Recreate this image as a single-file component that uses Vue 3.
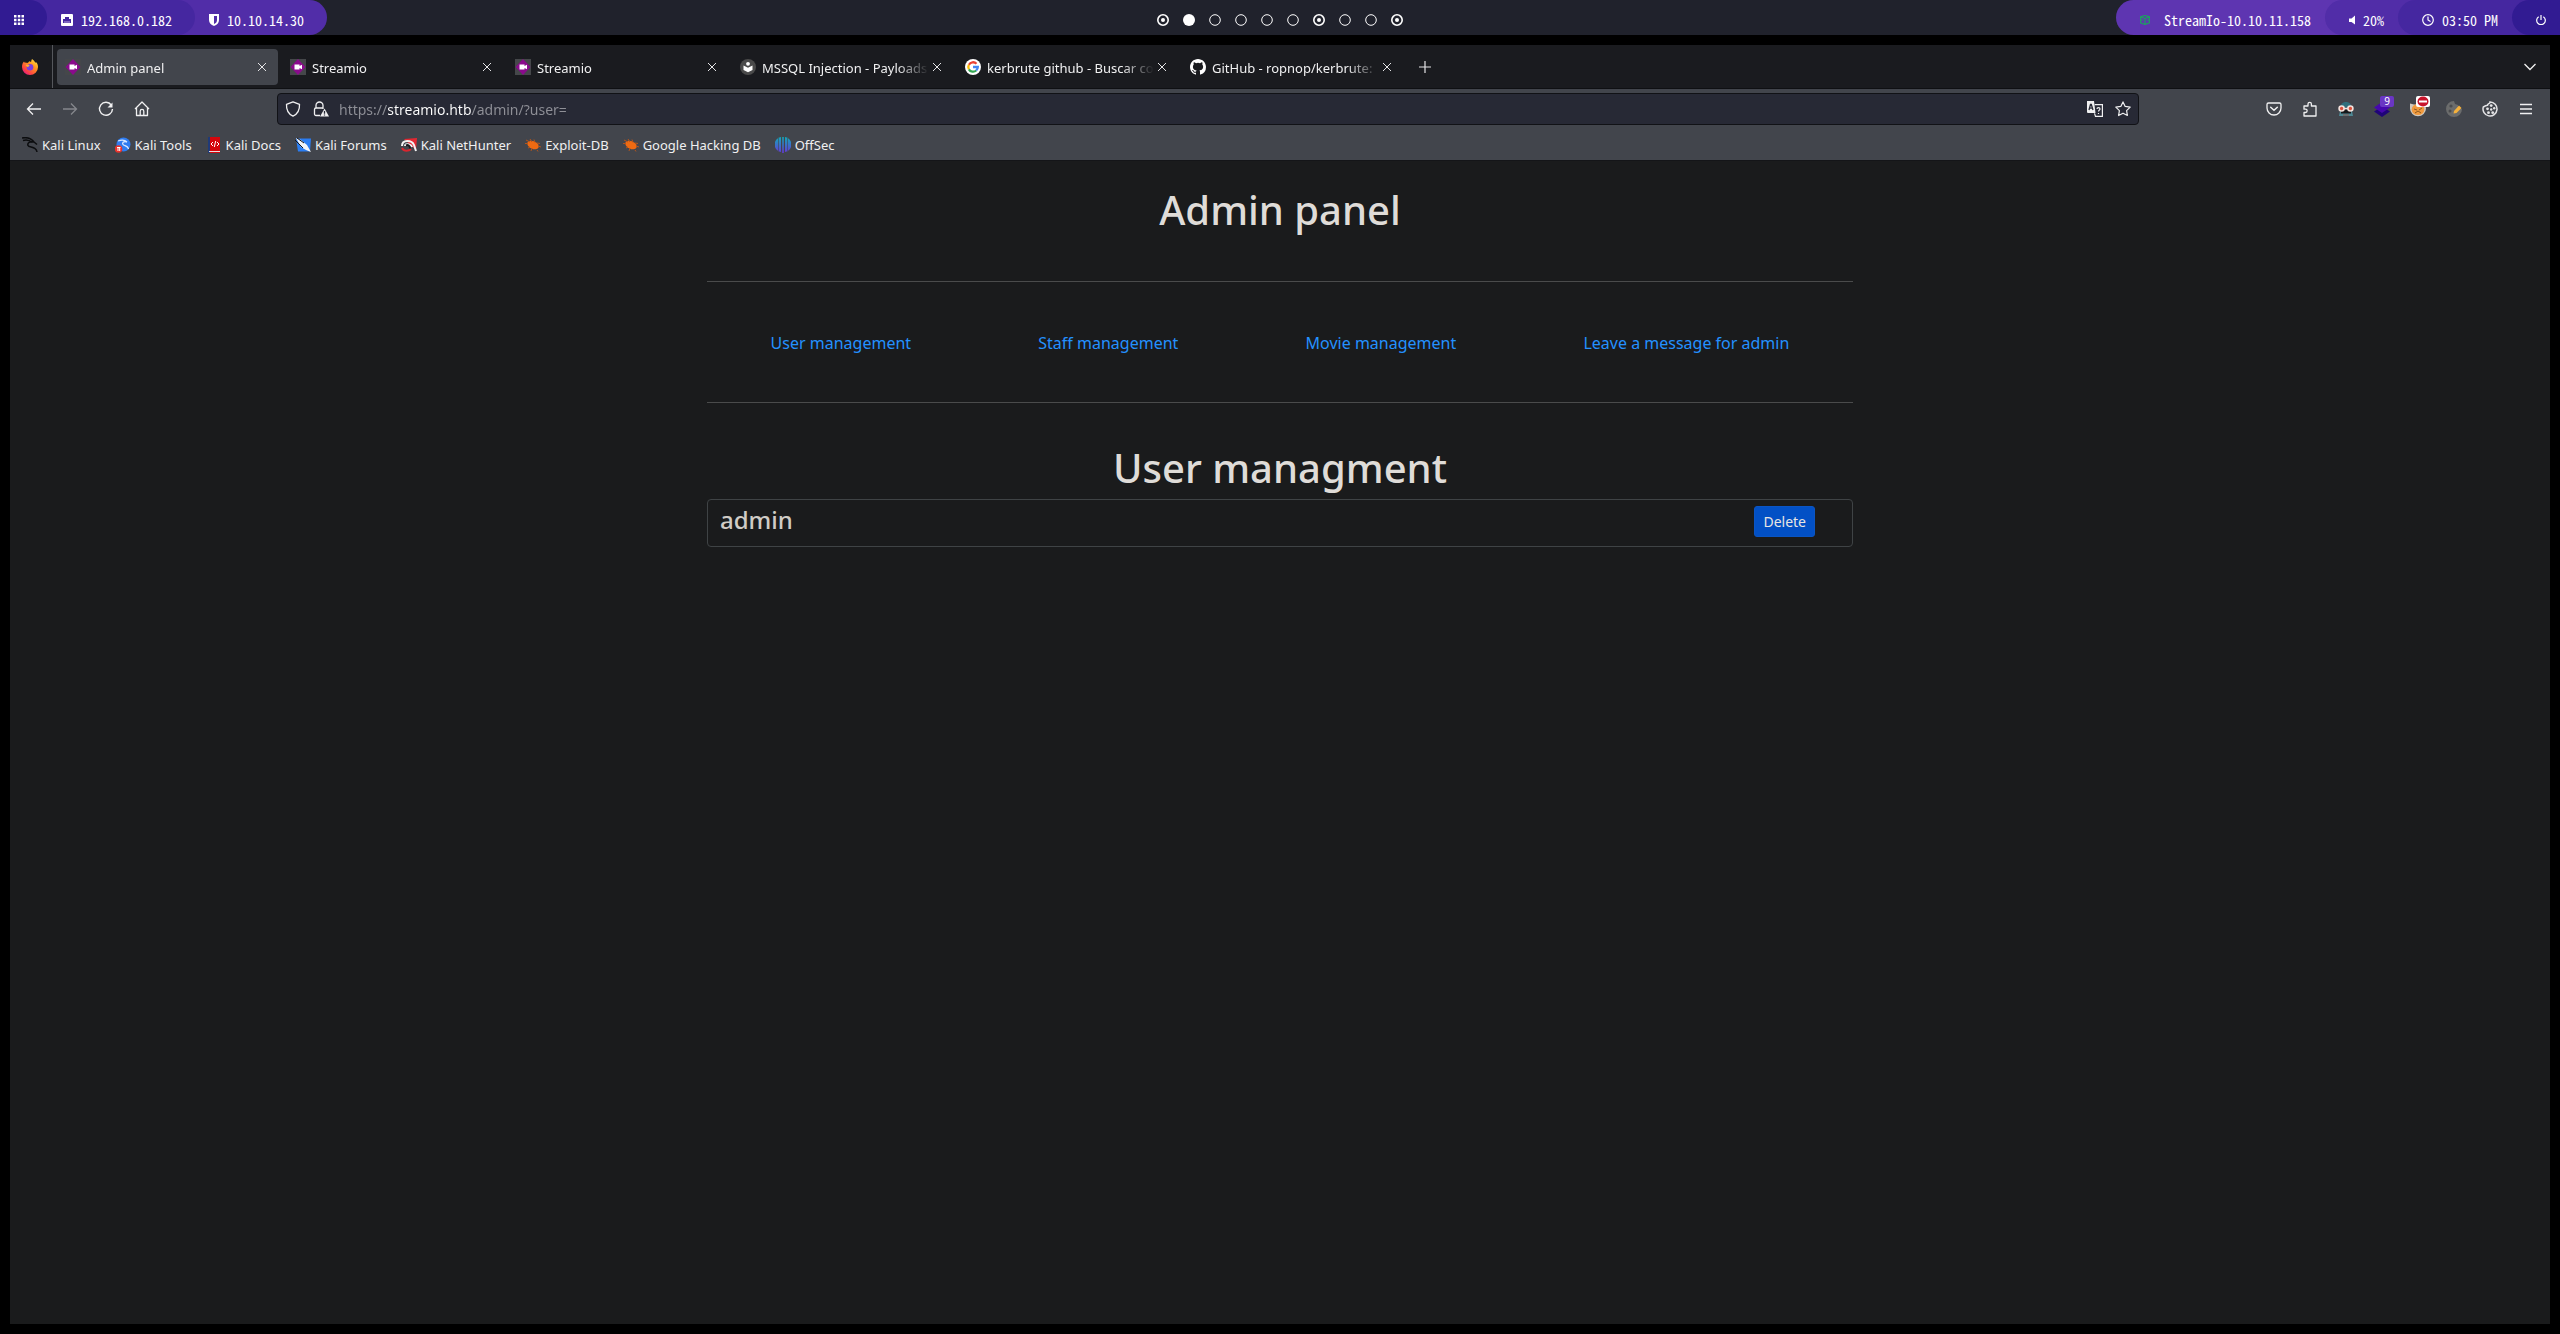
<script setup>
import { ref } from 'vue'

const leftSegments = [
  { tone: 'a', next: 'b', icon: 'grid', text: '' },
  { tone: 'b', next: 'c', icon: 'ethernet', text: '192.168.0.182' },
  { tone: 'c', next: 'bar', icon: 'vpn', text: '10.10.14.30' },
]
const rightSegments = [
  { tone: 'd', next: 'bar', icon: 'cube', text: 'StreamIo-10.10.11.158' },
  { tone: 'c', next: 'd', icon: 'volume', text: '20%' },
  { tone: 'b', next: 'c', icon: 'clock', text: '03:50 PM' },
  { tone: 'a', next: 'b', icon: 'power', text: '' },
]
const workspaces = ['busy', 'active', 'empty', 'empty', 'empty', 'empty', 'busy', 'empty', 'empty', 'busy']

const tabs = [
  { title: 'Admin panel', icon: 'streamio' },
  { title: 'Streamio', icon: 'streamio' },
  { title: 'Streamio', icon: 'streamio' },
  { title: 'MSSQL Injection - Payloads', icon: 'book' },
  { title: 'kerbrute github - Buscar co', icon: 'google' },
  { title: 'GitHub - ropnop/kerbrute:', icon: 'github' },
]
const bookmarks = [
  { label: 'Kali Linux', icon: 'kali' },
  { label: 'Kali Tools', icon: 'tools' },
  { label: 'Kali Docs', icon: 'docs' },
  { label: 'Kali Forums', icon: 'forums' },
  { label: 'Kali NetHunter', icon: 'nethunter' },
  { label: 'Exploit-DB', icon: 'exploit' },
  { label: 'Google Hacking DB', icon: 'exploit' },
  { label: 'OffSec', icon: 'offsec' },
]
const links = ['User management', 'Staff management', 'Movie management', 'Leave a message for admin']
const users = ['admin']
const url = ref('https://streamio.htb/admin/?user=')
</script>

<template>
  <div class="desktop">
    <header class="bar">
      <div class="side left">
        <div v-for="s in leftSegments" :key="s.icon" class="wrap" :class="'bg-' + s.next">
          <div class="seg" :class="['bg-' + s.tone, 'seg-' + s.icon]">
            <svg v-if="s.icon === 'grid'" width="10" height="10" viewBox="0 0 10 10" fill="#fff"><path d="M0 0h2.500v2.500H0zM3.800 0h2.500v2.500H3.800zM7.500 0H10v2.500H7.500zM0 3.800h2.500v2.500H0zM3.800 3.800h2.500v2.500H3.800zM7.500 3.800H10v2.500H7.500zM0 7.500h2.500V10H0zM3.800 7.500h2.500V10H3.800zM7.500 7.500H10V10H7.500z" /></svg>
            <svg v-else-if="s.icon === 'ethernet'" width="12" height="12" viewBox="0 0 12 12"><rect width="12" height="12" rx="1" fill="#fff" /><path d="M2 9V5h2V3h4v2h2v4z" fill="#4527a0" /><path d="M4 9V7M6 9V7M8 9V7" stroke="#b9a8de" stroke-width="1" /></svg>
            <svg v-else width="10" height="12" viewBox="0 0 10 12"><path d="M0 0h10v6c0 3-2 5-5 6-3-1-5-3-5-6z" fill="#fff" /><path d="M5 2h3v4c0 2-1 3-3 4z" fill="#512da8" /></svg>
            <span v-if="s.text">{{ s.text }}</span>
          </div>
        </div>
      </div>
      <div class="workspaces">
        <button v-for="(w, i) in workspaces" :key="i" class="ws" :aria-label="'Workspace ' + (i + 1)">
          <svg width="12" height="12" viewBox="0 0 12 12" fill="none" stroke="#fff">
            <circle v-if="w === 'active'" cx="6" cy="6" r="6" fill="#fff" stroke="none" />
            <circle v-else-if="w === 'empty'" cx="6" cy="6" r="5.3" stroke-width="1" />
            <template v-else><circle cx="6" cy="6" r="5.2" stroke-width="1.6" /><circle cx="6" cy="6" r="2" fill="#fff" stroke="none" /></template>
          </svg>
        </button>
      </div>
      <div class="side right">
        <div v-for="s in rightSegments" :key="s.icon" class="wrap" :class="'bg-' + s.next">
          <div class="seg" :class="['bg-' + s.tone, 'seg-' + s.icon]">
            <svg v-if="s.icon === 'cube'" width="10" height="10" viewBox="0 0 10 10" fill="none" stroke="#1f9d63" stroke-width="1.200"><path d="M5 .5l4.400 1.300v6L5 9.500.6 7.800v-6zM.6 1.800L5 3.500l4.400-1.700M5 3.500v6M.6 5H3M7 5h2.400" /></svg>
            <svg v-else-if="s.icon === 'volume'" width="6" height="10" viewBox="0 0 6 10" fill="#fff"><path d="M6 .5v9L2.500 7H0V3.500h2.500z" /></svg>
            <svg v-else-if="s.icon === 'clock'" width="12" height="12" viewBox="0 0 12 12" fill="none" stroke="#fff" stroke-width="1.200"><circle cx="6" cy="6" r="5.300" /><path d="M6 2.500V6l2.500 1.500" /></svg>
            <svg v-else width="10" height="10" viewBox="0 0 10 10" fill="none" stroke="#fff" stroke-width="1.200"><path d="M5 0v5M2.700 1.700a4.300 4.300 0 1 0 4.600 0" /></svg>
            <span v-if="s.text">{{ s.text }}</span>
          </div>
        </div>
      </div>
    </header>

    <div class="window">
      <nav class="tabstrip" aria-label="Tabs">
        <button class="pinned" aria-label="Firefox View">
          <svg width="16" height="16" viewBox="0 0 16 16">
            <defs>
              <linearGradient id="fx" x1="1" y1="0" x2=".2" y2="1"><stop offset="0" stop-color="#fff14f" /><stop offset=".4" stop-color="#ff9a1f" /><stop offset=".75" stop-color="#ff4a3f" /><stop offset="1" stop-color="#e31587" /></linearGradient>
            </defs>
            <path d="M10 0c2 1.200 2.500 2.400 3 3.300.6.300 1 .2 1.200-.1C15.500 4.500 16 6.300 16 8a8 8 0 0 1-16 0c0-2.400.8-4.200 1.800-5.500L2 4l1-1.500L3.600 4c.8-.3 1.600-.3 2.400 0 .2-.8.900-1.400 1.600-1.700.900.300 1.200.7 1.400 1C9.200 2 9.500 1 10 0z" fill="url(#fx)" />
            <circle cx="8" cy="8.200" r="3.300" fill="#7a3fe0" />
            <path d="M3.500 6c1.500-1 3-.6 4.500.8-1.500 0-1.700.7-1.500 1.500-1.200-.3-2.300-1-3-2.300z" fill="#ffb02e" />
          </svg>
        </button>
        <div v-for="(t, i) in tabs" :key="i" class="tab" :class="{ selected: i === 0 }">
          <svg v-if="t.icon === 'streamio'" class="ico" viewBox="0 0 16 16"><rect width="16" height="16" fill="#45474a" /><path d="M8 0l7.500 8L8 16 .5 8z" fill="#8a0b8c" /><path d="M4.500 5.500h5V7l2.500-1.200v4.400L9.500 9v1.500h-5z" fill="#fff" /></svg>
          <svg v-else-if="t.icon === 'book'" class="ico" viewBox="0 0 16 16"><circle cx="8" cy="8" r="8" fill="#4a4a4a" /><circle cx="8" cy="4.800" r="1.900" fill="#fff" /><path d="M3.500 6.500L8 8.800l4.500-2.300v4.500L8 13.200 3.500 11z" fill="#fff" /></svg>
          <svg v-else-if="t.icon === 'google'" class="ico" viewBox="0 0 16 16"><circle cx="8" cy="8" r="8" fill="#fff" /><g fill="none" stroke-width="2.300"><path d="M11.500 4.700A4.800 4.800 0 0 0 3.900 5.700" stroke="#ea4335" /><path d="M3.900 5.700a4.800 4.800 0 0 0 0 4.600" stroke="#fbbc05" /><path d="M3.900 10.300a4.800 4.800 0 0 0 7.300 1.200" stroke="#34a853" /><path d="M11.200 11.500A4.800 4.800 0 0 0 12.800 8H8" stroke="#4285f4" /></g></svg>
          <svg v-else class="ico" viewBox="0 0 16 16" fill="#fff"><path d="M8 0C3.580 0 0 3.580 0 8c0 3.540 2.290 6.530 5.470 7.590.4.070.55-.17.55-.38 0-.19-.01-.82-.01-1.490-2.010.37-2.530-.49-2.690-.94-.09-.23-.48-.94-.82-1.130-.28-.15-.68-.52-.01-.53.63-.01 1.080.58 1.230.82.72 1.210 1.870.87 2.330.66.07-.52.28-.87.51-1.070-1.780-.2-3.640-.89-3.640-3.950 0-.87.31-1.590.82-2.150-.08-.2-.36-1.020.08-2.120 0 0 .67-.21 2.200.82a7.420 7.420 0 0 1 4 0c1.530-1.040 2.200-.82 2.200-.82.44 1.100.16 1.920.08 2.120.51.56.82 1.270.82 2.150 0 3.070-1.870 3.750-3.650 3.950.29.25.54.73.54 1.480 0 1.070-.01 1.930-.01 2.200 0 .21.15.46.55.38A8 8 0 0 0 16 8c0-4.420-3.580-8-8-8z" /></svg>
          <span class="title">{{ t.title }}</span>
          <button class="close" aria-label="Close tab"><svg width="10" height="10" viewBox="0 0 10 10" stroke="#e4e4e6"><path d="M1 1l8 8M9 1L1 9" /></svg></button>
        </div>
        <button class="newtab" aria-label="New tab"><svg width="12" height="12" viewBox="0 0 12 12" stroke="#e4e4e6" stroke-width="1.200"><path d="M6 0v12M0 6h12" /></svg></button>
        <button class="alltabs" aria-label="List all tabs"><svg width="12" height="8" viewBox="0 0 12 8" fill="none" stroke="#f0f0f1" stroke-width="1.300"><path d="M.5 1L6 6.500 11.500 1" /></svg></button>
      </nav>

      <div class="toolbar">
        <div class="navbtns">
          <button aria-label="Back"><svg class="ico" viewBox="0 0 16 16" fill="none" stroke="#f0f0f1" stroke-width="1.300"><path d="M1.500 8H15M7 2.500L1.500 8 7 13.500" /></svg></button>
          <button aria-label="Forward" disabled><svg class="ico" viewBox="0 0 16 16" fill="none" stroke="#85878c" stroke-width="1.300"><path d="M1 8h13.500M9 2.500L14.500 8 9 13.500" /></svg></button>
          <button aria-label="Reload"><svg class="ico" viewBox="0 0 16 16" fill="none" stroke="#f0f0f1" stroke-width="1.400"><path d="M13.300 4A6.500 6.500 0 1 0 14.500 8" /><path d="M14.500 1.500v5h-5z" fill="#f0f0f1" stroke="none" /></svg></button>
          <button aria-label="Home"><svg class="ico" viewBox="0 0 16 16" fill="none" stroke="#f0f0f1" stroke-width="1.300" stroke-linejoin="round"><path d="M1 8l7-7 7 7M2.500 7v7.500h11V7M6.200 14.500v-4.300a1.800 1.800 0 0 1 3.600 0v4.300" /></svg></button>
        </div>
        <div class="urlbar">
          <svg class="ico" viewBox="0 0 16 16" fill="none" stroke="#f0f0f1" stroke-width="1.300" stroke-linejoin="round"><path d="M8 .8l6.500 2.500c.3 5.200-1.800 9.700-6.500 11.900C3.300 13 1.200 8.500 1.500 3.300z" /></svg>
          <svg class="ico lock" viewBox="0 0 16 16" fill="none" stroke="#f0f0f1" stroke-width="1.300"><path d="M7 14.500H3A1.500 1.500 0 0 1 1.500 13V8.500A1.500 1.500 0 0 1 3 7h7M3 7V4.500a3.500 3.500 0 0 1 7 0V8" /><path d="M11.500 7.500L16 15.500H7z" fill="#f0f0f1" stroke="none" /><path d="M11.500 10v2.700M11.500 13.500v1" stroke="#272935" /></svg>
          <input v-model="url" type="text" aria-label="Address" />
          <svg class="ico" viewBox="0 0 16 16"><path d="M0 0h7l1.500 12H1a1 1 0 0 1-1-1z" fill="#f0f0f1" /><path d="M7.700 3.600h7.700v11.800H8.500l-1-3" fill="none" stroke="#f0f0f1" stroke-width="1.200" /><path d="M2 9l1.500-5.500h.8L6 9M2.600 7.200h2.600" fill="none" stroke="#272935" stroke-width="1.300" /><path d="M10 8c0-1.800 3-1.800 3 0 0 1-1.500 1-1.500 2.500M11.500 12v1" fill="none" stroke="#f0f0f1" stroke-width="1.200" /></svg>
          <svg class="ico star" viewBox="0 0 16 16" fill="none" stroke="#f0f0f1" stroke-width="1.200" stroke-linejoin="round"><path d="M8 .9l2.200 4.500 5 .7-3.600 3.500.8 4.900L8 12.200l-4.400 2.300.8-4.900L.8 6.100l5-.7z" /></svg>
        </div>
        <div class="extbtns">
          <button aria-label="Pocket"><svg class="ico" viewBox="0 0 16 16" fill="none" stroke="#f0f0f1" stroke-width="1.300" stroke-linecap="round"><path d="M2.500 2h11A1.500 1.500 0 0 1 15 3.500V7A7 7 0 0 1 1 7V3.500A1.500 1.500 0 0 1 2.500 2z" /><path d="M4.700 6.200L8 9.300l3.300-3.100" stroke-width="1.500" /></svg></button>
          <button aria-label="Extensions"><svg class="ico" viewBox="0 0 16 16" fill="none" stroke="#f0f0f1" stroke-width="1.300" stroke-linejoin="round"><path d="M2 5h4V3a1.700 1.700 0 0 1 3.400 0v2H14v10H2v-3.500h1.500a1.600 1.600 0 0 0 0-3.300H2z" /></svg></button>
          <button aria-label="User agent"><svg class="ico" viewBox="0 0 16 16"><path d="M2.500 6.500c-.5-7.500 11.500-7.500 11 0z" fill="#2f6f7c" /><path d="M2 10h12l1 5H1z" fill="#4d8894" /><path d="M3 9h10v3.500H3z" fill="#16171a" /><path d="M5 13h6v2H5z" fill="#1b1c20" /><path d="M6 13v2M8 13v2M10 13v2" stroke="#e8e8e8" stroke-width=".8" /><path d="M6 7.500h4" stroke="#f4e2dc" stroke-width="1.500" /><circle cx="3.600" cy="7.500" r="2.500" fill="#d9523d" stroke="#f4e2dc" stroke-width="1.600" /><circle cx="12.400" cy="7.500" r="2.500" fill="#d9523d" stroke="#f4e2dc" stroke-width="1.600" /></svg></button>
          <button aria-label="Wappalyzer" class="badged"><svg class="ico" viewBox="0 0 16 16"><path d="M8 5.500l8 5-8 5.500-8-5.500z" fill="#1f0478" /><path d="M8 1l8 5.500-8 5.500L0 6.500z" fill="#4608ad" /></svg><span class="badge">9</span></button>
          <button aria-label="Proxy" class="badged"><svg class="ico" viewBox="0 0 16 16"><path d="M0 2.500l4 1h8l3-2 1 6a8 7.800 0 0 1-16 0z" fill="#cfc8bd" /><ellipse cx="8" cy="8.500" rx="6.300" ry="5.500" fill="#f19a3e" /><path d="M4 8l3 1M12 7L9 9M5 12l3-2 3 2" stroke="#8c5a20" fill="none" /></svg><span class="badge block"><svg width="12" height="11" viewBox="0 0 12 11"><ellipse cx="6" cy="5.500" rx="5.500" ry="5" fill="#c8142c" /><path d="M2 4.500h8v2H2z" fill="#fff" /></svg></span></button>
          <button aria-label="Cookie editor"><svg class="ico" viewBox="0 0 16 16"><path d="M8 0a8 8 0 1 0 8 8l-3-1-1-3-3-1z" fill="#6b6c6c" /><circle cx="5" cy="5" r="1.600" fill="#4a4b4d" /><circle cx="4" cy="10" r="1.500" fill="#4a4b4d" /><path d="M7.500 12.500L8 10l5-5.500L15.500 7l-5 5z" fill="#f5b13c" /></svg></button>
          <button aria-label="Cookies"><svg class="ico" viewBox="0 0 16 16"><path d="M8 1c.2 1.700-2.500 1.600-2.500 3.300C4 4.500 3 5 1.300 6A7 7 0 1 0 8 1z" fill="none" stroke="#e4e4e6" stroke-width="1.500" /><g fill="#e4e4e6"><circle cx="9.200" cy="4.600" r="1.400" /><circle cx="5.500" cy="7.800" r="1.400" /><circle cx="9.200" cy="8.500" r="1.200" /><circle cx="12.200" cy="7.300" r="1.200" /><circle cx="6.500" cy="11.700" r="1.400" /><circle cx="10.700" cy="11.700" r="1.400" /></g></svg></button>
          <button aria-label="Menu"><svg class="ico" viewBox="0 0 16 16" stroke="#f0f0f1" stroke-width="1.300"><path d="M2 3.500h12M2 8h12M2 12.500h12" /></svg></button>
        </div>
      </div>

      <nav class="bookmarks" aria-label="Bookmarks">
        <a v-for="b in bookmarks" :key="b.label" href="#">
          <svg v-if="b.icon === 'kali'" class="ico" viewBox="0 0 16 16" fill="none" stroke="#0c0d0f"><path d="M0 1c5-1 9 0 12 4M1 3.500c4-1 7 0 9 2M12 5c-4-1-7 1-6 3.500 1 2.500 8 .5 9 6.500M12 5l3 2.500" stroke-width="1.500" /></svg>
          <svg v-else-if="b.icon === 'tools'" class="ico" viewBox="0 0 16 16"><circle cx="8.500" cy="7.500" r="7" fill="#2f7cf0" /><path d="M3 4c4-1.500 7-1 9 1M12 5c-4-1-5 1-4 2.500s5 1 5.500 4.500" stroke="#d9e8ff" fill="none" stroke-width="1.300" /><circle cx="3.500" cy="12" r="3.800" fill="#e8322b" /><path d="M2 10.500h3.500M3 11v3M4.700 11v3" stroke="#fff" /></svg>
          <svg v-else-if="b.icon === 'docs'" class="ico" viewBox="0 0 16 16"><path d="M2 0h12v16H2z" fill="#d4060c" /><path d="M2 0h2v16H2z" fill="#203a78" /><path d="M3 14h11v1H3z" fill="#e9dede" /><path d="M7 5L5 7l2 2M11 5l2 2-2 2M9.700 4L8.300 10" stroke="#fff" fill="none" /></svg>
          <svg v-else-if="b.icon === 'forums'" class="ico" viewBox="0 0 16 16"><path d="M1 1.500h15l-1 13H3z" fill="#2a7df2" /><path d="M1 1l5 2 6 5 4 7-5-2-5-3z" fill="#f2f4f8" /><path d="M0 3l8 8M2 1l7 5" stroke="#15161a" /></svg>
          <svg v-else-if="b.icon === 'nethunter'" class="ico" viewBox="0 0 16 16"><path d="M3 2l13-1-1 12z" fill="#e32832" /><path d="M1 9c0-7 10-6 12-1l2 6M4 9c0-3 6-2 7 1" stroke="#f4f4f4" stroke-width="2" fill="none" /><path d="M1 11c2 4 7 3 9 1" stroke="#d8262f" stroke-width="2" fill="none" /><path d="M5 8.500c2-1 4 0 4 3" stroke="#16171b" stroke-width="2" fill="none" /></svg>
          <svg v-else-if="b.icon === 'exploit'" class="ico" viewBox="0 0 16 16"><ellipse cx="8" cy="8" rx="6" ry="3.800" transform="rotate(25 8 8)" fill="#ee6a12" /><path d="M1 3l4 2M0 6.500h3M5 2l2 3M9 2.500l1 3M3 11l2-1M6 14l1-3M12 13l1 1.500M12 6l3 .5M13 9l3 1" stroke="#b3541c" /></svg>
          <svg v-else class="ico" viewBox="0 0 16 16" fill="none"><defs><linearGradient id="os" x2="0" y2="1"><stop stop-color="#12a8b8" /><stop offset="1" stop-color="#6438d8" /></linearGradient></defs><path d="M6 0v15A7.600 7.600 0 0 1 6 0zM7.200 0h1.600v16H7.200zM10 0a7.600 7.600 0 0 1 0 15z" fill="url(#os)" /><path d="M3.500 1v13M12.500 1v13" stroke="#42454c" stroke-width=".6" /></svg>
          <span>{{ b.label }}</span>
        </a>
      </nav>

      <main class="page">
        <div class="container">
          <h1>Admin panel</h1>
          <nav class="links" aria-label="Admin sections">
            <a v-for="l in links" :key="l" href="#">{{ l }}</a>
          </nav>
          <h1>User managment</h1>
          <div v-for="u in users" :key="u" class="row">
            <h4>{{ u }}</h4>
            <button class="delete">Delete</button>
          </div>
        </div>
      </main>
    </div>
  </div>
</template>

<style>
body {
  background: #000;
}
</style>

<style scoped>
* {
  box-sizing: border-box;
}
button {
  display: flex;
  align-items: center;
  justify-content: center;
  padding: 0;
  border: 0;
  background: none;
  font: inherit;
  color: inherit;
}
svg {
  display: block;
  flex: none;
}
.ico {
  width: 16px;
  height: 16px;
}
.desktop {
  display: flex;
  flex-direction: column;
  min-height: 100vh;
  background: #000;
  font-family: "Noto Sans", sans-serif;
}

/* status bar */
.bar {
  display: grid;
  grid-template-columns: 1fr auto 1fr;
  height: 35px;
  background: #20222c;
  color: #fff;
  font-family: "Noto Sans Mono CJK SC", "Noto Sans Mono CJK JP", "Liberation Mono", monospace;
  font-size: 14px;
}
.side {
  display: flex;
}
.right {
  justify-content: flex-end;
}
.seg {
  display: flex;
  align-items: center;
  gap: 8px;
  height: 35px;
  line-height: 20px;
}
.left .seg {
  padding: 5px 23px 0 14px;
  border-radius: 0 18px 18px 0;
}
.right .seg {
  padding: 5px 14px 0 24px;
  border-radius: 18px 0 0 18px;
}
.right .seg-cube {
  gap: 14px;
}
.bg-a { background: #311b92; }
.bg-b { background: #4527a0; }
.bg-c { background: #512da8; }
.bg-d { background: #5e35b1; }
.bg-bar { background: #20222c; }
.workspaces {
  display: flex;
  align-items: center;
  gap: 14px;
  padding-top: 5px;
}

/* browser window */
.window {
  flex: 1;
  display: flex;
  flex-direction: column;
  margin: 10px;
  background: #42454c;
  color: #f0f0f1;
  font-size: 13px;
}
.tabstrip {
  display: flex;
  align-items: center;
  height: 44px;
  background: #1a1b1f;
  border-bottom: 1px solid #0f1013;
}
.pinned {
  width: 43px;
  height: 43px;
  padding-right: 3px;
  margin-right: 2px;
  border-right: 1px solid #55575c;
}
.tab {
  display: flex;
  align-items: center;
  flex: 0 1 221px;
  min-width: 0;
  height: 36px;
  margin: 0 2px;
  padding: 0 8px;
  border-radius: 4px;
}
.selected {
  background: #42454c;
}
.title {
  flex: 1;
  min-width: 0;
  margin-left: 6px;
  padding-top: 2px;
  overflow: hidden;
  white-space: nowrap;
  line-height: 20px;
  mask-image: linear-gradient(to left, transparent, #000 32px);
}
.close {
  width: 16px;
  height: 16px;
}
.newtab {
  width: 32px;
  height: 32px;
  margin-left: 4px;
}
.alltabs {
  width: 32px;
  height: 32px;
  margin-left: auto;
  margin-right: 4px;
}
.toolbar {
  display: flex;
  align-items: center;
  height: 40px;
}
.navbtns,
.extbtns {
  display: flex;
}
.navbtns {
  padding-left: 6px;
}
.extbtns {
  margin-left: auto;
  padding-right: 6px;
}
.navbtns button,
.extbtns button {
  width: 36px;
  height: 32px;
}
.urlbar {
  flex: 0 1 1862px;
  display: flex;
  align-items: center;
  height: 32px;
  margin-left: 117px;
  padding: 0 7px;
  border: 1px solid #111216;
  border-radius: 4px;
  background: #272935;
}
.lock {
  margin-left: 12px;
}
.star {
  margin-left: 12px;
}
input {
  flex: 1;
  min-width: 0;
  height: 28px;
  margin-left: 10px;
  padding: 0;
  border: 0;
  outline: 0;
  font: 14px/20px "Noto Sans", sans-serif;
  color: #fff;
  -webkit-text-fill-color: transparent;
  background: linear-gradient(90deg, #8f9097 48px, #fff 48px 133px, #8f9097 133px);
  background-clip: text;
  -webkit-background-clip: text;
}
.badged {
  position: relative;
}
.badge {
  position: absolute;
  top: 3px;
  right: 6px;
  width: 14px;
  height: 11px;
  border-radius: 2px;
  background: #6a36c4;
  color: #fff;
  font-size: 10px;
  line-height: 11px;
  text-align: center;
}
.block {
  display: flex;
  justify-content: center;
  background: #fff;
}
.bookmarks {
  display: flex;
  gap: 14px;
  height: 32px;
  padding: 0 12px;
  border-bottom: 1px solid #141518;
}
.bookmarks a {
  display: flex;
  align-items: center;
  gap: 4px;
  color: inherit;
  text-decoration: none;
  white-space: nowrap;
}

/* admin page */
.page {
  flex: 1;
  padding: 25px 12px;
  background: #1a1b1c;
  color: #dfdcd8;
}
.container {
  max-width: 1146px;
  margin: 0 auto;
}
h1 {
  margin: 0 0 7px;
  font-size: 40px;
  line-height: 48px;
  font-weight: 500;
  text-align: center;
}
.links {
  display: flex;
  justify-content: space-around;
  margin: 47px 0 41px;
  padding: 49px 0 47px;
  border: solid #4a4b4b;
  border-width: 1px 0;
  font-size: 16px;
  line-height: 24px;
}
.links a {
  color: #2491ff;
  text-decoration: none;
}
.row {
  display: flex;
  justify-content: space-between;
  align-items: flex-start;
  padding: 6px 37px 9px 12px;
  border: 1px solid #3f4345;
  border-radius: 4px;
}
h4 {
  margin: 0;
  font-size: 24px;
  line-height: 28px;
  font-weight: 500;
  color: #d0ccc6;
}
.delete {
  height: 31px;
  padding: 0 8px;
  border: 1px solid #0a55c4;
  border-radius: 3px;
  background: #0250c5;
  color: #e8e6e3;
  font-size: 14px;
  line-height: 21px;
}
</style>
